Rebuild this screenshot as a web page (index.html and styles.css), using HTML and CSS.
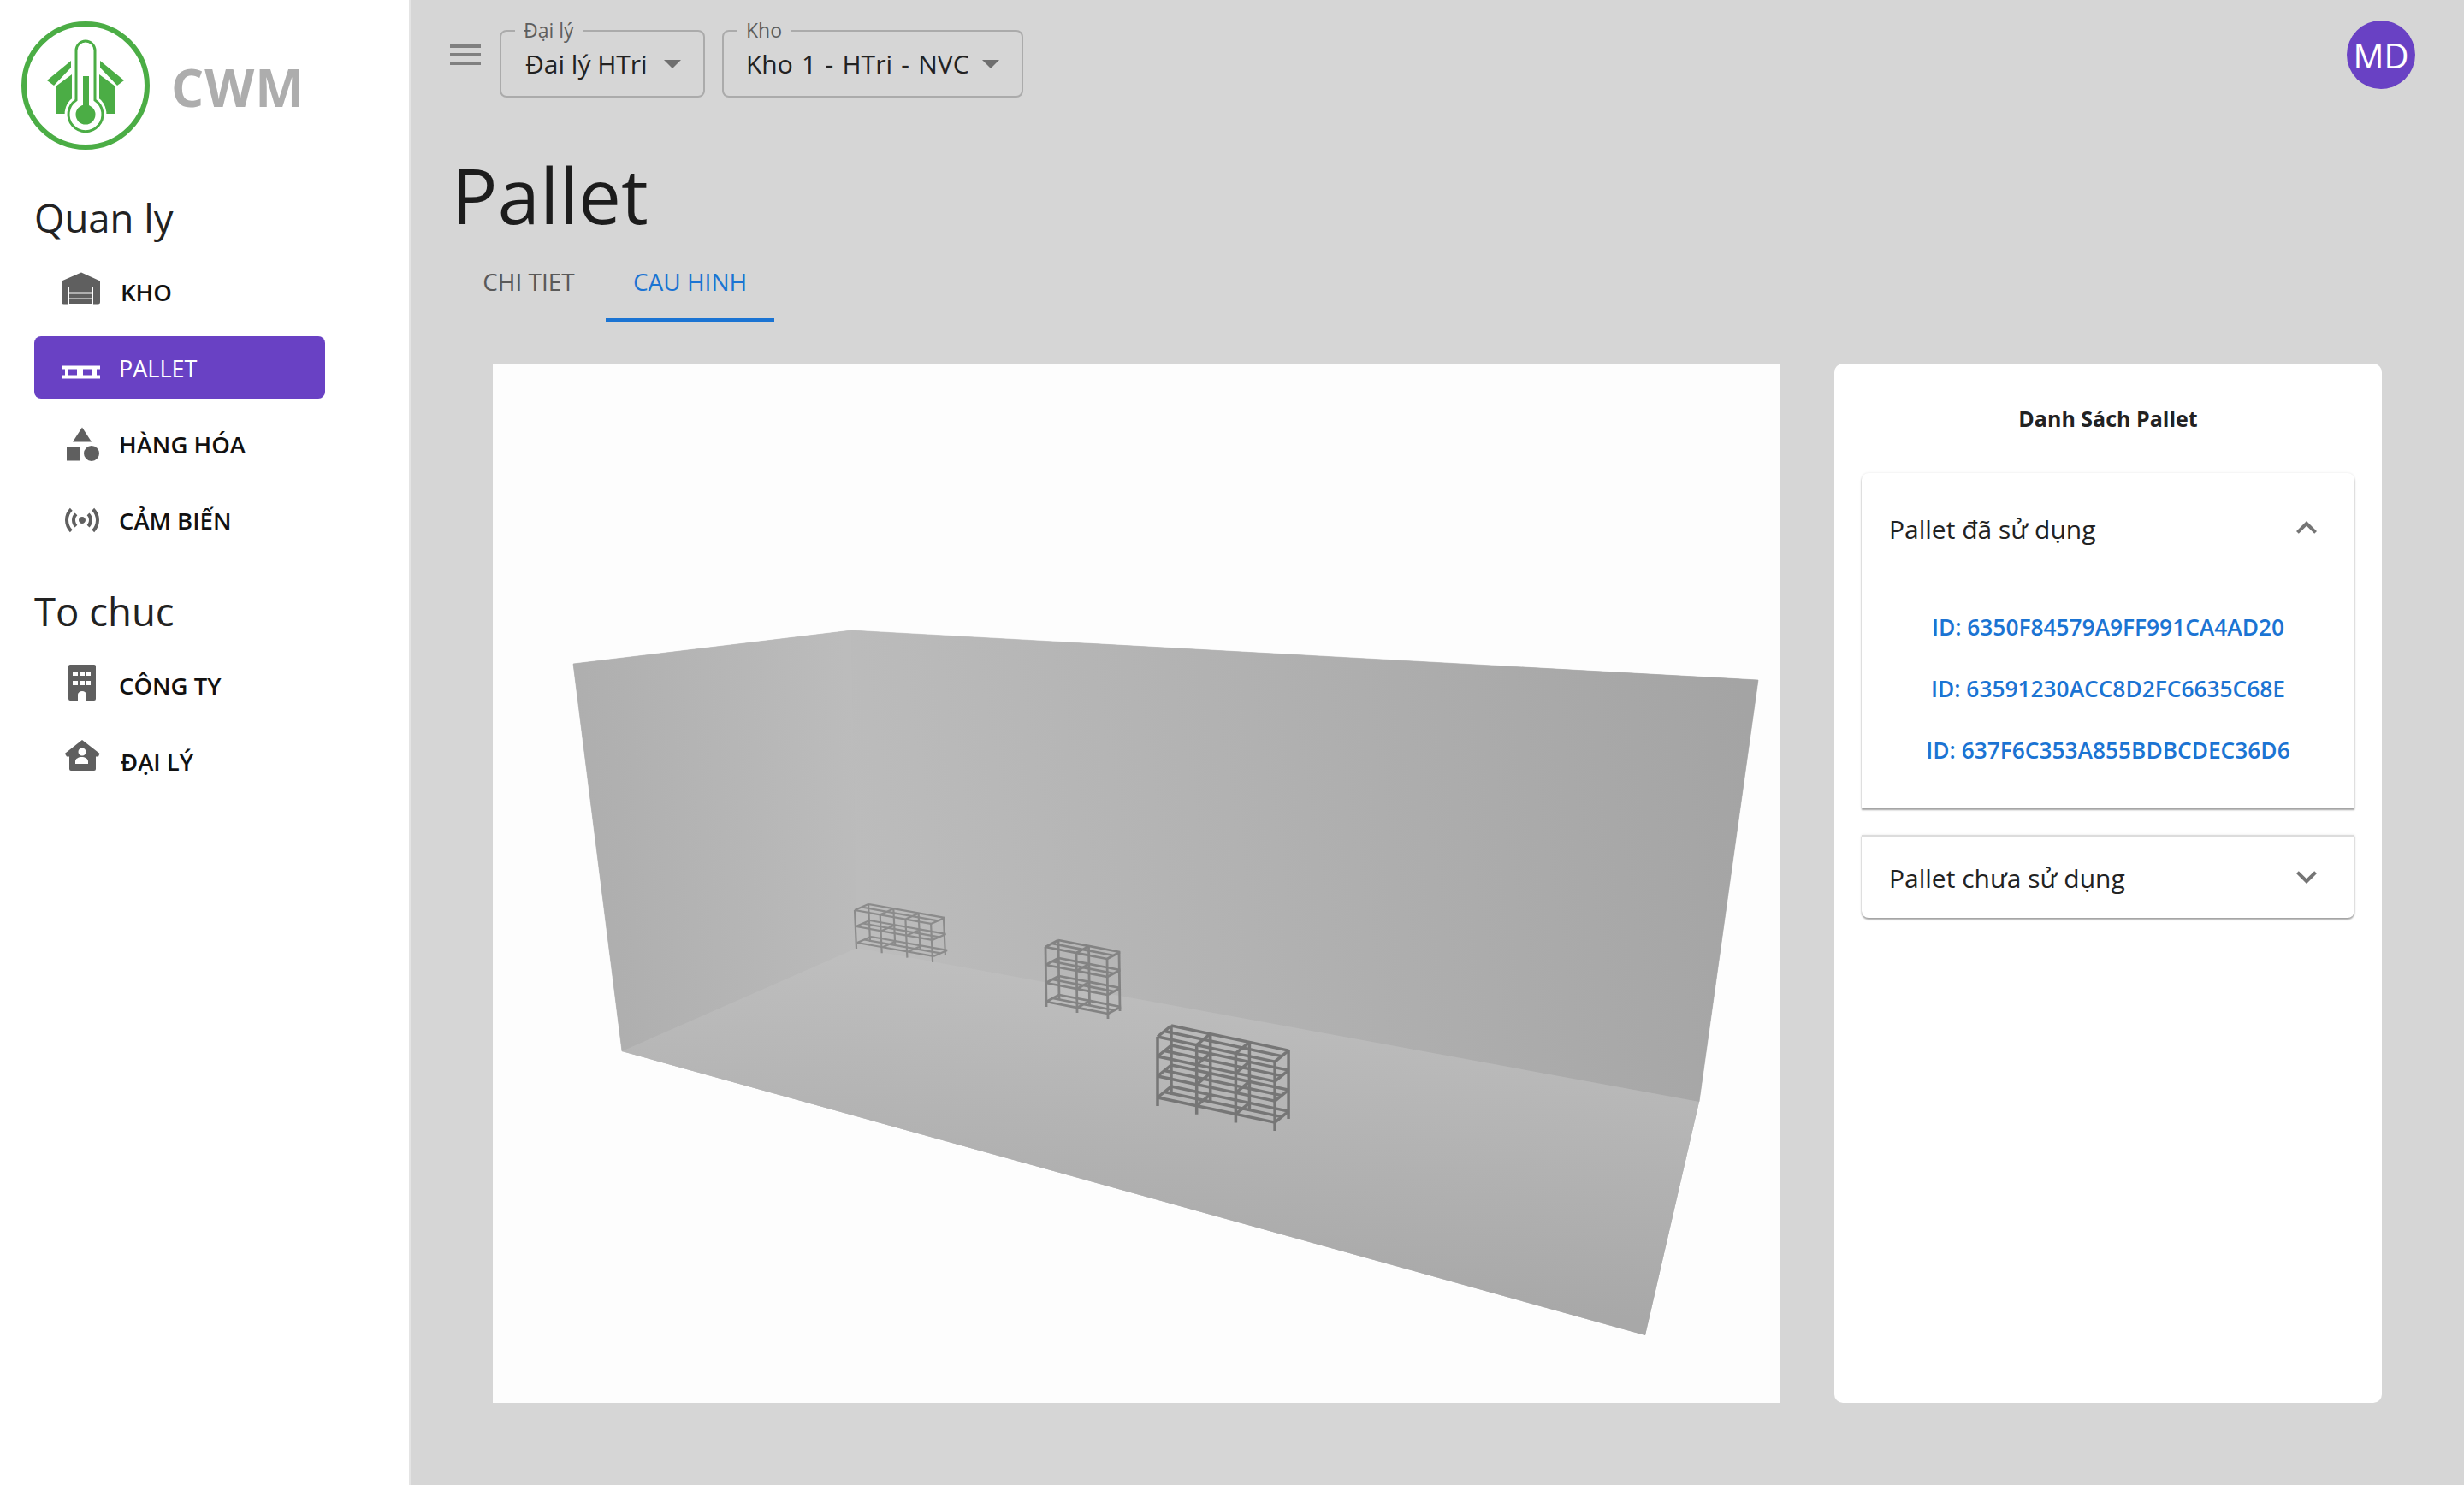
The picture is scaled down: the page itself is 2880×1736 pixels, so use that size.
FILE: index.html
```html
<!DOCTYPE html>
<html lang="vi">
<head>
<meta charset="utf-8">
<title>Pallet</title>
<link rel="stylesheet" href="styles.css">
</head>
<body>
<div class="app">
  <aside class="sidebar">
    <div class="brand">
      <svg class="logo" viewBox="0 0 200 200" width="200" height="200">
        <circle cx="100" cy="100" r="72" fill="none" stroke="#4bad45" stroke-width="6"/>
        <g fill="#4bad45">
          <polygon points="55,94 83,71 83,79 63,100"/>
          <polygon points="145,94 117,71 117,79 137,100"/>
          <polygon points="65,101 84,87 84,133 65,133"/>
          <polygon points="135,101 116,87 116,133 135,133"/>
        </g>
        <path d="M89 117V59a11 11 0 0 1 22 0V117a20 20 0 1 1-22 0z" fill="#fff" stroke="#fff" stroke-width="9"/>
        <path d="M89 117V59a11 11 0 0 1 22 0V117a20 20 0 1 1-22 0z" fill="#fff" stroke="#4bad45" stroke-width="3"/>
        <rect x="97" y="89" width="7" height="36" fill="#4bad45"/>
        <circle cx="100" cy="134" r="11.5" fill="#4bad45"/>
      </svg>
      <span class="brand-name">CWM</span>
    </div>
    <h2 class="nav-title first">Quan ly</h2>
    <nav class="nav-group">
      <a class="nav-row">
        <svg class="nav-icon" viewBox="0 0 48 48"><path d="M23 1.500 0 11.500V36a2.500 2.500 0 0 0 2.500 2.500H8V18h29v20.500h5.500A2.500 2.500 0 0 0 45 36V11.500z" fill="#5f5f5f"/><path d="M9 19h27v5.500H9zM9 26.500h27v5H9zM9 33h27v5H9z" fill="#5f5f5f"/></svg>
        <span class="row-kho">KHO</span>
      </a>
      <a class="nav-row active">
        <svg class="nav-icon" viewBox="0 0 48 48"><path d="M0 21.500h45v4h-4v7h4v4H0v-4h4v-7H0zM8 25.500v7h10v-7zM25 25.500v7h11v-7z" fill="#fff" fill-rule="evenodd"/></svg>
        <span class="row-pallet">PALLET</span>
      </a>
      <a class="nav-row">
        <svg class="nav-icon" viewBox="0 0 48 48"><g fill="#5f5f5f"><polygon points="24,4.500 13,21.500 35,21.500"/><rect x="6" y="27.500" width="16" height="16"/><circle cx="35" cy="35" r="9"/></g></svg>
        <span>HÀNG HÓA</span>
      </a>
      <a class="nav-row">
        <svg class="nav-icon" viewBox="0 0 24 24"><path d="M7.760 16.240C6.670 15.160 6 13.660 6 12s.67-3.160 1.760-4.240l1.420 1.420C8.450 9.900 8 10.900 8 12c0 1.100.45 2.100 1.170 2.830l-1.410 1.410zm8.480 0C17.330 15.160 18 13.660 18 12s-.67-3.160-1.760-4.240l-1.420 1.420C15.550 9.900 16 10.900 16 12c0 1.100-.45 2.100-1.170 2.830l1.410 1.410zM12 10c-1.100 0-2 .9-2 2s.9 2 2 2 2-.9 2-2-.9-2-2-2zm8 2c0 2.210-.9 4.210-2.350 5.650l1.420 1.420C20.880 17.260 22 14.760 22 12s-1.120-5.260-2.930-7.070l-1.420 1.420C19.100 7.790 20 9.790 20 12zM6.350 6.350 4.930 4.930C3.120 6.740 2 9.240 2 12s1.120 5.260 2.930 7.070l1.420-1.420C4.900 16.210 4 14.210 4 12s.9-4.210 2.350-5.650z" fill="#5f5f5f"/></svg>
        <span>CẢM BIẾN</span>
      </a>
    </nav>
    <h2 class="nav-title second">To chuc</h2>
    <nav class="nav-group">
      <a class="nav-row">
        <svg class="nav-icon" viewBox="0 0 48 48"><path fill-rule="evenodd" fill="#5f5f5f" d="M10 0h28a2 2 0 0 1 2 2v38a2 2 0 0 1-2 2H29V35a5 4 0 0 0-10 0v7H10a2 2 0 0 1-2-2V2a2 2 0 0 1 2-2zM13 9v4h6V9zM21 9v4h6V9zM29 9v4h5V9zM13 19v5h6v-5zM21 19v5h6v-5zM29 19v5h5v-5z"/></svg>
        <span>CÔNG TY</span>
      </a>
      <a class="nav-row">
        <svg class="nav-icon" viewBox="0 0 48 48"><path fill-rule="evenodd" fill="#5f5f5f" d="M24-1 44.500 15 43 18.500H40V33a2 2 0 0 1-2 2H11a2 2 0 0 1-2-2V18.500H6L3.800 15zM24 8.500a4.500 4.500 0 1 0 0 9 4.500 4.500 0 0 0 0-9zM16 27h15v-3c0-3-4-5-7.500-5S16 21 16 24z"/></svg>
        <span class="row-kho">ĐẠI LÝ</span>
      </a>
    </nav>
  </aside>

  <main class="main">
    <header class="topbar">
      <svg class="menu-icon" viewBox="0 0 24 24"><path d="M3 18h18v-2H3v2zm0-5h18v-2H3v2zm0-7v2h18V6H3z" fill="#808080"/></svg>
      <div class="select select-agent">
        <span class="select-label">Đại lý</span>
        <span class="select-value">Đai lý HTri</span>
        <i class="caret"></i>
      </div>
      <div class="select select-store">
        <span class="select-label">Kho</span>
        <span class="select-value">Kho 1 - HTri - NVC</span>
        <i class="caret"></i>
      </div>
      <div class="avatar">MD</div>
    </header>

    <section class="page">
      <h1 class="page-title">Pallet</h1>
      <div class="tabs">
        <div class="tab tab-detail">CHI TIET</div>
        <div class="tab tab-config">CAU HINH</div>
      </div>
      <div class="content">
        <div class="scene">
          <svg class="scene-svg" viewBox="576 425 1504 1215" width="1504" height="1215">
            <defs>
              <linearGradient id="wallL" gradientUnits="userSpaceOnUse" x1="670" y1="900" x2="1000" y2="860">
                <stop offset="0" stop-color="#aeaeae"/><stop offset="1" stop-color="#bcbcbc"/>
              </linearGradient>
              <linearGradient id="wallB" gradientUnits="userSpaceOnUse" x1="1000" y1="1000" x2="2040" y2="820">
                <stop offset="0" stop-color="#bcbcbc"/><stop offset="1" stop-color="#a4a4a4"/>
              </linearGradient>
              <linearGradient id="floor" gradientUnits="userSpaceOnUse" x1="1002" y1="1120" x2="981" y2="1490">
                <stop offset="0" stop-color="#bebebe"/><stop offset="1" stop-color="#a8a8a8"/>
              </linearGradient>
              <path id="lvl3" class="bar" d="M0 0H3M0 .5H3M0 1H3M0 0V1M1 0V1M2 0V1M3 0V1"/>
              <path id="lvl2" class="bar" d="M0 0H2M0 .5H2M0 1H2M0 0V1M1 0V1M2 0V1"/>
              <path id="leg3" class="bar" d="M0 0V1M1 0V1M2 0V1M3 0V1"/>
              <path id="leg2" class="bar" d="M0 0V1M1 0V1M2 0V1"/>
            </defs>
            <polygon points="670,776 995,737 2055,795 1986,1288 1923,1561 727,1229" fill="#b6b6b6"/>
            <polygon points="670,776 995,737 1002,1108 727,1229" fill="url(#wallL)" stroke="url(#wallL)" stroke-width=".6"/>
            <polygon points="995,737 2055,795 1986,1288 1002,1108" fill="url(#wallB)" stroke="url(#wallB)" stroke-width=".6"/>
            <polygon points="1002,1108 1986,1288 1923,1561 727,1229" fill="url(#floor)"/>
            <g class="shelf shelf-far">
              <use href="#leg3" transform="matrix(29.300 5 2 44 1015 1057)"/>
              <use href="#lvl3" transform="matrix(29.700 5.300 16 -7 999 1064)"/>
              <use href="#lvl3" transform="matrix(29.700 5.300 16 -7 1000.500 1083)"/>
              <use href="#lvl3" transform="matrix(29.700 5.300 16 -7 1002 1102)"/>
              <use href="#leg3" transform="matrix(29.700 5.300 2 45 999 1064)"/>
            </g>
            <g class="shelf shelf-mid">
              <use href="#leg2" transform="matrix(35.500 6.500 1 70 1237 1099)"/>
              <use href="#lvl2" transform="matrix(36 7 15 -8 1222 1107)"/>
              <use href="#lvl2" transform="matrix(36 7 15 -8 1222.300 1128)"/>
              <use href="#lvl2" transform="matrix(36 7 15 -8 1222.600 1149)"/>
              <use href="#lvl2" transform="matrix(36 7 15 -8 1223 1171)"/>
              <use href="#leg2" transform="matrix(36 7 1 70 1222 1107)"/>
            </g>
            <g class="shelf shelf-near">
              <use href="#leg3" transform="matrix(45.700 9.300 0 81 1369 1199)"/>
              <use href="#lvl3" transform="matrix(45.700 9.700 16 -13 1353 1212)"/>
              <use href="#lvl3" transform="matrix(45.700 9.700 16 -13 1353 1235)"/>
              <use href="#lvl3" transform="matrix(45.700 9.700 16 -13 1353 1258)"/>
              <use href="#lvl3" transform="matrix(45.700 9.700 16 -13 1353 1283)"/>
              <use href="#leg3" transform="matrix(45.700 9.700 0 81 1353 1212)"/>
            </g>
          </svg>
        </div>
        <aside class="panel">
          <h3 class="panel-title">Danh Sách Pallet</h3>
          <div class="accordion open">
            <div class="acc-head">
              <span>Pallet đã sử dụng</span>
              <svg class="chev" viewBox="0 0 24 24"><path d="m12 8-6 6 1.410 1.410L12 10.830l4.590 4.580L18 14z" fill="#757575"/></svg>
            </div>
            <ul class="id-list">
              <li>ID: 6350F84579A9FF991CA4AD20</li>
              <li>ID: 63591230ACC8D2FC6635C68E</li>
              <li>ID: 637F6C353A855BDBCDEC36D6</li>
            </ul>
          </div>
          <div class="accordion closed">
            <div class="acc-head">
              <span>Pallet chưa sử dụng</span>
              <svg class="chev" viewBox="0 0 24 24"><path d="M16.590 8.590 12 13.170 7.410 8.590 6 10l6 6 6-6z" fill="#757575"/></svg>
            </div>
          </div>
        </aside>
      </div>
    </section>
  </main>
</div>
</body>
</html>
```

FILE: styles.css
```css
* { box-sizing: border-box; }
html, body { margin: 0; padding: 0; }
body {
  width: 2880px;
  height: 1736px;
  overflow: hidden;
  font-family: "Open Sans", "Noto Sans", sans-serif;
  color: #222;
  background: #d6d6d6;
}
.app { display: flex; width: 2880px; height: 1736px; }

/* Sidebar */
.sidebar {
  width: 480px;
  flex: none;
  background: #fff;
  border-right: 2px solid #e4e4e4;
  padding-bottom: 40px;
}
.brand { display: flex; align-items: center; height: 200px; }
.logo { flex: none; display: block; }
.brand-name {
  font-size: 60px;
  font-weight: 700;
  color: #adadad;
  margin-left: 0;
  margin-top: 3px;
  letter-spacing: 1px;
}
.nav-title {
  margin: 0 0 0 40px;
  font-size: 45.500px;
  font-weight: 400;
  color: #222;
}
.nav-title.first { height: 104px; line-height: 108px; }
.nav-title.second { height: 120px; line-height: 140px; }
.nav-group { display: flex; flex-direction: column; gap: 16px; }
.nav-row {
  display: flex;
  align-items: center;
  gap: 20px;
  margin-left: 40px;
  width: 340px;
  height: 73px;
  padding-left: 32px;
  border-radius: 8px;
  font-size: 27.500px;
  font-weight: 600;
  color: #111;
}
.nav-row span { padding-top: 2px; margin-left: -1px; }
.nav-row .row-kho { margin-left: 1px; }
.nav-row .row-pallet { font-size: 27px; font-weight: 500; }
.nav-row.active { background: #6941c4; color: #fff; }
.nav-icon { width: 48px; height: 48px; flex: none; overflow: visible; }

/* Main */
.main { flex: 1; min-width: 0; display: flex; flex-direction: column; }
.topbar {
  display: flex;
  align-items: flex-start;
  height: 128px;
  padding: 0 57px 0 40px;
}
.menu-icon { width: 48px; height: 48px; flex: none; margin-top: 40px; margin-right: 16px; }
.select {
  position: relative;
  display: flex;
  align-items: center;
  justify-content: space-between;
  height: 79px;
  margin-top: 35px;
  margin-right: 20px;
  padding: 0 26px 0 28px;
  border: 2px solid #ababab;
  border-radius: 8px;
}
.select-agent { width: 240px; }
.select-store { width: 352px; padding-left: 26px; }
.select-label {
  position: absolute;
  left: 16px;
  top: -15px;
  height: 26px;
  line-height: 26px;
  padding: 0 10px;
  background: #d6d6d6;
  font-size: 23px;
  color: #5e5e5e;
}
.select-value { font-size: 30px; color: #222; white-space: nowrap; }
.select-store .select-value { word-spacing: 2.500px; }
.caret {
  flex: none;
  width: 0;
  height: 0;
  border-left: 10px solid transparent;
  border-right: 10px solid transparent;
  border-top: 10px solid #6f6f6f;
}
.avatar {
  margin-left: auto;
  margin-top: 24px;
  width: 80px;
  height: 80px;
  border-radius: 50%;
  background: #6941c4;
  color: #fff;
  display: flex;
  align-items: center;
  justify-content: center;
  font-size: 40px;
}

.page { padding: 0 48px; flex: 1; display: flex; flex-direction: column; }
.page-title {
  margin: 0;
  height: 152px;
  padding-top: 50px;
  line-height: 100px;
  font-size: 89px;
  font-weight: 400;
  color: #1c1c1c;
}
.tabs {
  display: flex;
  height: 97px;
  border-bottom: 1px solid #bdbdbd;
}
.tab {
  display: flex;
  align-items: center;
  justify-content: center;
  height: 96px;
  padding-top: 2px;
  font-size: 28px;
  font-weight: 400;
}
.tab-detail { width: 180px; color: #595959; }
.tab-config { width: 197px; color: #1b74d3; box-shadow: inset 0 -4px 0 #1b74d3; }

.content {
  display: flex;
  gap: 64px;
  padding: 48px 48px 0;
}
.scene {
  width: 1504px;
  height: 1215px;
  background: #fdfdfd;
  flex: none;
}
.scene-svg { display: block; }
.bar { vector-effect: non-scaling-stroke; fill: none; }
.shelf { fill: none; }
.shelf-far { stroke: #8b8b8b; stroke-width: 2.200; }
.shelf-mid { stroke: #838383; stroke-width: 2.800; }
.shelf-near { stroke: #767676; stroke-width: 3.500; }

.panel {
  width: 640px;
  height: 1215px;
  flex: none;
  background: #fff;
  border-radius: 10px;
  padding: 0 32px;
}
.panel-title {
  margin: 0;
  height: 128px;
  padding-top: 44px;
  line-height: 40px;
  text-align: center;
  font-size: 25px;
  font-weight: 700;
  color: #222;
}
.accordion {
  background: #fff;
  box-shadow: 0 2px 2px rgba(0,0,0,.35), 0 0 3px rgba(0,0,0,.1);
  border-radius: 8px;
}
.accordion.open { height: 392px; border-radius: 8px 8px 0 0; }
.accordion.closed {
  height: 97px;
  margin-top: 31px;
  border-top: 2px solid #dcdcdc;
  border-radius: 0 0 8px 8px;
}
.acc-head {
  display: flex;
  align-items: center;
  justify-content: space-between;
  padding: 0 32px;
  font-size: 30px;
  font-weight: 400;
  color: #222;
}
.open .acc-head { height: 134px; padding-bottom: 3px; }
.closed .acc-head { height: 95px; padding-top: 2px; }
.chev { width: 48px; height: 48px; flex: none; margin-right: 0; margin-top: -4px; }
.id-list {
  list-style: none;
  margin: 0;
  padding: 26px 0 0;
  display: flex;
  flex-direction: column;
  gap: 32px;
  text-align: center;
  font-size: 26.300px;
  font-weight: 600;
  line-height: 40px;
  color: #1b74d3;
}
```
